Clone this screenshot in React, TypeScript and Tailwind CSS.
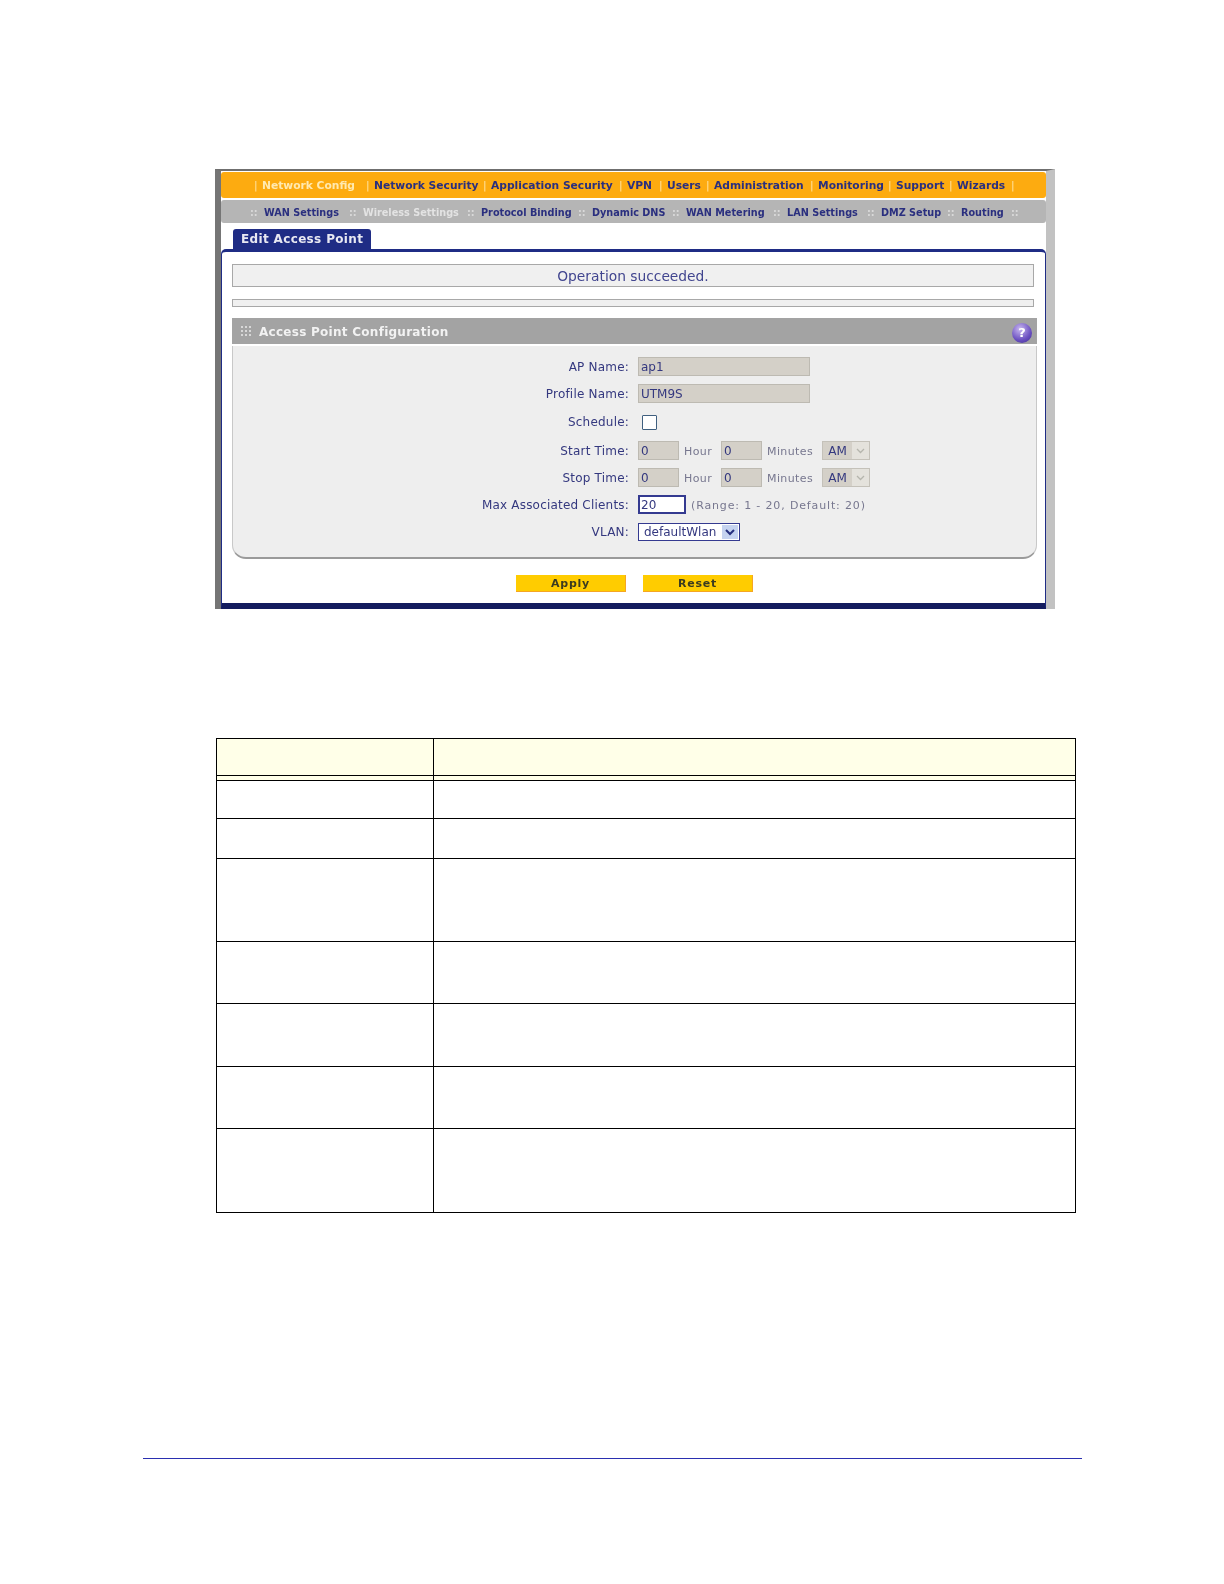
const font = "font-['DejaVu_Sans','Liberation_Sans',sans-serif]"

const mainNav = [
  { label: 'Network Config', w: 'w-[112px]', active: true },
  { label: 'Network Security', w: 'w-[117px]' },
  { label: 'Application Security', w: 'w-[136px]' },
  { label: 'VPN', w: 'w-[40px]' },
  { label: 'Users', w: 'w-[47px]' },
  { label: 'Administration', w: 'w-[104px]' },
  { label: 'Monitoring', w: 'w-[78px]' },
  { label: 'Support', w: 'w-[61px]' },
  { label: 'Wizards', w: 'w-[62px]' },
]

const subNav = [
  { label: 'WAN Settings', w: 'w-[99px]' },
  { label: 'Wireless Settings', w: 'w-[118px]', active: true },
  { label: 'Protocol Binding', w: 'w-[111px]' },
  { label: 'Dynamic DNS', w: 'w-[94px]' },
  { label: 'WAN Metering', w: 'w-[101px]' },
  { label: 'LAN Settings', w: 'w-[94px]' },
  { label: 'DMZ Setup', w: 'w-[80px]' },
  { label: 'Routing', w: 'w-[64px]' },
]

const tableRows = ['h-[38px]', 'h-[40px]', 'h-[83px]', 'h-[62px]', 'h-[63px]', 'h-[62px]', 'h-[83px]']

function Field({ label, h, children }: { label: string; h: string; children: React.ReactNode }) {
  return (
    <div className={`flex items-center ${h}`}>
      <div className="w-[405px] pr-[9px] text-right text-[12px] tracking-[0.2px] text-[#34387f] whitespace-nowrap">{label}</div>
      <div className="flex items-center">{children}</div>
    </div>
  )
}

function GreyInput({ value, w }: { value: string; w: string }) {
  return (
    <span className={`${w} h-[19px] bg-[#d4d0c8] border border-[#bdbab2] pl-[2px] text-[12px] leading-[18px] text-[#34387f]`}>{value}</span>
  )
}

function AmPm() {
  return (
    <span className="flex w-[48px] h-[19px] bg-[#d4d0c8] border border-[#c4c1b9] text-[12px] leading-[18px] text-[#34387f]">
      <span className="w-[29px] text-center">AM</span>
      <span className="flex-1 bg-[#e4e2dc] flex items-center justify-center">
        <svg width="9" height="6" viewBox="0 0 9 6"><path d="M1 1l3.5 3.5L8 1" fill="none" stroke="#b5b5ad" strokeWidth="1.3" /></svg>
      </span>
    </span>
  )
}

function TimeRow({ label }: { label: string }) {
  return (
    <Field label={label} h="h-[27px]">
      <GreyInput value="0" w="w-[41px]" />
      <span className="w-[42px] pl-[5px] pt-[3px] text-[11px] tracking-[0.4px] text-[#77778f]">Hour</span>
      <GreyInput value="0" w="w-[41px]" />
      <span className="w-[60px] pl-[5px] pt-[3px] text-[11px] tracking-[0.4px] text-[#77778f]">Minutes</span>
      <AmPm />
    </Field>
  )
}

export default function App() {
  return (
    <div className={`w-[1224px] h-[1584px] overflow-hidden bg-white pt-[169px] ${font}`}>
      {/* screenshot of the router page */}
      <div className="ml-[215px] w-[840px] h-[440px] border-t-2 border-l-[6px] border-r-[9px] border-t-[#6f6f6f] border-l-[#757575] border-r-[#c2c2c2] pt-px blur-[0.3px]">
        <div className="flex items-center h-[26px] bg-[#fdab10] rounded-[3px] pl-[33px] pt-[3px] text-[10.7px] font-bold text-[#2a2f7f] whitespace-nowrap">
          {mainNav.map((item) => (
            <div key={item.label} className={`flex items-center ${item.w}`}>
              <span className="w-[8px] text-[#ffe2a0] font-normal">|</span>
              <span className={item.active ? 'text-[#ffe9b0]' : ''}>{item.label}</span>
            </div>
          ))}
          <span className="text-[#ffe2a0] font-normal">|</span>
        </div>
        <div className="flex items-center h-[23px] mt-[2px] bg-[#b5b5b5] rounded-[3px] pl-[29px] pt-[3px] text-[9.7px] font-bold text-[#2a2f7f] whitespace-nowrap">
          {subNav.map((item) => (
            <div key={item.label} className={`flex items-center ${item.w}`}>
              <span className="w-[14px] text-[#d9d9d9]">::</span>
              <span className={item.active ? 'text-[#e3e3e3]' : ''}>{item.label}</span>
            </div>
          ))}
          <span className="text-[#d9d9d9]">::</span>
        </div>
        <div className="ml-[12px] mt-[6px] w-[138px] h-[20px] bg-[#1f2c85] rounded-t-[3px] pl-[8px] text-[12px] leading-[21px] font-bold tracking-[0.35px] text-[#e8e8f2] whitespace-nowrap">
          Edit Access Point
        </div>
        <div className="h-[360px] border-t-[3px] border-x border-b-[6px] border-[#1f2c85] border-b-[#141c5e] rounded-t-[5px] bg-white pt-[12px] pl-[10px]">
          <div className="w-[802px] h-[23px] bg-[#f0f0f0] border border-[#a8a8a8] text-center text-[13.8px] leading-[23px] text-[#41458f]">
            Operation succeeded.
          </div>
          <div className="w-[802px] h-[8px] mt-[12px] bg-[#f0f0f0] border border-[#a8a8a8]" />
          <div className="flex items-center justify-between w-[805px] h-[26px] mt-[11px] bg-[#a3a3a3] pl-[9px] pr-[5px]">
            <div className="flex items-center gap-[8px]">
              <svg width="10" height="10" viewBox="0 0 10 10" fill="#d8d8d8">
                <rect x="0" y="0" width="2" height="2" /><rect x="4" y="0" width="2" height="2" /><rect x="8" y="0" width="2" height="2" />
                <rect x="0" y="4" width="2" height="2" /><rect x="4" y="4" width="2" height="2" /><rect x="8" y="4" width="2" height="2" />
                <rect x="0" y="8" width="2" height="2" /><rect x="4" y="8" width="2" height="2" /><rect x="8" y="8" width="2" height="2" />
              </svg>
              <span className="pt-[2px] text-[12px] font-bold tracking-[0.27px] text-[#f2f2f2]">Access Point Configuration</span>
            </div>
            <span className="w-[20px] h-[20px] mt-[4px] rounded-full bg-[radial-gradient(circle_at_40%_30%,#c9b8f0,#6a4fc0_60%,#3d2a90)] text-center text-[13px] leading-[20px] font-bold text-white">?</span>
          </div>
          <div className="w-[805px] h-[213px] mt-[2px] bg-[#eeeeee] border-x border-[#c8c8c8] border-b-[2px] border-b-[#9a9a9a] rounded-b-[14px] pt-[7px]">
            <Field label="AP Name:" h="h-[27px]"><GreyInput value="ap1" w="w-[172px]" /></Field>
            <Field label="Profile Name:" h="h-[27px]"><GreyInput value="UTM9S" w="w-[172px]" /></Field>
            <Field label="Schedule:" h="h-[30px]">
              <span className="ml-[4px] w-[15px] h-[15px] bg-white border border-[#3f5f7f] rounded-[1px]" />
            </Field>
            <TimeRow label="Start Time:" />
            <TimeRow label="Stop Time:" />
            <Field label="Max Associated Clients:" h="h-[27px]">
              <span className="w-[48px] h-[19px] bg-white border-2 border-[#343a90] pl-[1px] text-[12px] leading-[16px] text-[#34387f]">20</span>
              <span className="pl-[5px] pt-[3px] text-[11px] tracking-[0.85px] text-[#77778f] whitespace-nowrap">(Range: 1 - 20, Default: 20)</span>
            </Field>
            <Field label="VLAN:" h="h-[28px]">
              <span className="flex items-center w-[102px] h-[18px] bg-white border border-[#343a90] pl-[5px] text-[12px] text-[#34387f]">
                <span className="flex-1">defaultWlan</span>
                <span className="flex items-center justify-center w-[16px] h-[14px] mr-[1px] bg-[#c5d3f0]">
                  <svg width="10" height="7" viewBox="0 0 10 7"><path d="M1 1l4 4 4-4" fill="none" stroke="#26307f" strokeWidth="2" /></svg>
                </span>
              </span>
            </Field>
          </div>
          <div className="flex gap-[17px] mt-[16px] ml-[284px]">
            <div className="w-[110px] h-[17px] bg-[#ffcc00] border-b border-r border-[#f5a623] text-center text-[11px] leading-[18px] font-bold tracking-[0.8px] text-[#3b3b20]">Apply</div>
            <div className="w-[110px] h-[17px] bg-[#ffcc00] border-b border-r border-[#f5a623] text-center text-[11px] leading-[18px] font-bold tracking-[0.8px] text-[#3b3b20]">Reset</div>
          </div>
        </div>
      </div>

      {/* settings table, cells are blank in the source */}
      <div className="ml-[216px] mt-[129px] w-[860px] border border-black">
        <div className="flex h-[37px] bg-[#ffffe8] border-b border-black">
          <div className="w-[217px] border-r border-black" />
        </div>
        <div className="flex h-[5px] bg-[#ffffe8] border-b border-black">
          <div className="w-[217px] border-r border-black" />
        </div>
        {tableRows.map((h, i) => (
          <div key={i} className={`flex ${h} ${i < tableRows.length - 1 ? 'border-b border-black' : ''}`}>
            <div className="w-[217px] border-r border-black" />
          </div>
        ))}
      </div>

      <div className="ml-[143px] mt-[245px] w-[939px] h-px bg-[#2a2fb0]" />
    </div>
  )
}
